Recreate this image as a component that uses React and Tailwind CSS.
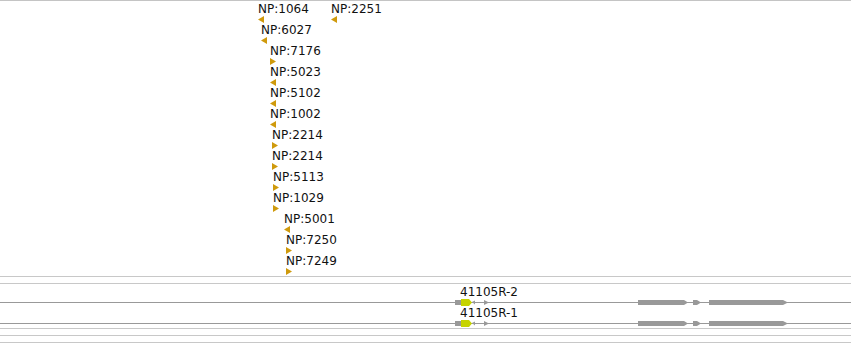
const rows = [
  [
    { label: "NP:1064", x: 258, dir: "left" },
    { label: "NP:2251", x: 331, dir: "left" },
  ],
  [{ label: "NP:6027", x: 261, dir: "left" }],
  [{ label: "NP:7176", x: 270, dir: "right" }],
  [{ label: "NP:5023", x: 270, dir: "left" }],
  [{ label: "NP:5102", x: 270, dir: "left" }],
  [{ label: "NP:1002", x: 270, dir: "left" }],
  [{ label: "NP:2214", x: 272, dir: "right" }],
  [{ label: "NP:2214", x: 272, dir: "right" }],
  [{ label: "NP:5113", x: 273, dir: "right" }],
  [{ label: "NP:1029", x: 273, dir: "right" }],
  [{ label: "NP:5001", x: 284, dir: "left" }],
  [{ label: "NP:7250", x: 286, dir: "right" }],
  [{ label: "NP:7249", x: 286, dir: "right" }],
];

function Arrow({ dir }) {
  return (
    <svg width="6" height="7" viewBox="0 0 6 7" className="block">
      {dir === "left" ? (
        <polygon points="6,0 6,7 0,3.5" fill="#cf9a0c" />
      ) : (
        <polygon points="0,0 0,7 6,3.5" fill="#cf9a0c" />
      )}
    </svg>
  );
}

function Feature({ f }) {
  return (
    <div className="absolute top-0 flex flex-col items-start" style={{ left: f.x }}>
      <span className="h-[14px] leading-[14px] text-[12px] text-[#111] whitespace-nowrap">
        {f.label}
      </span>
      <Arrow dir={f.dir} />
    </div>
  );
}

function GeneTrack({ label }) {
  return (
    <div className="flex flex-col">
      <div className="h-[14px] pl-[460px] leading-[14px] text-[12px] text-[#111]">{label}</div>
      <svg width="851" height="7" className="block">
        <rect x="0" y="3" width="851" height="1" fill="#999" />
        <rect x="455" y="1" width="6" height="5" fill="#999" />
        <polygon points="461,0 469,0 472,3.5 469,7 461,7" fill="#c6d300" />
        <polygon points="472,3 475,1.5 475,5.5" fill="#999" />
        <polygon points="484,1 489,3.5 484,6" fill="#999" />
        <polygon points="638,1 684,1 688,3.5 684,6 638,6" fill="#999" />
        <polygon points="693,1 697,1 701,3.5 697,6 693,6" fill="#999" />
        <polygon points="709,1 783,1 788,3.5 783,6 709,6" fill="#999" />
      </svg>
    </div>
  );
}

export default function App() {
  return (
    <div className="w-[851px] h-[343px] bg-white overflow-hidden font-['DejaVu_Sans',sans-serif]">
      <div className="h-px bg-[#c4c4c4]" />
      <div className="flex flex-col pt-[1px]">
        {rows.map((row, i) => (
          <div key={i} className="relative h-[21px]">
            {row.map((f, j) => (
              <Feature key={j} f={f} />
            ))}
          </div>
        ))}
      </div>
      <div className="mt-[1px] h-px bg-[#c8c8c8]" />
      <div className="mt-[6px] h-px bg-[#c8c8c8]" />
      <div className="mt-[1px]">
        <GeneTrack label="41105R-2" />
        <GeneTrack label="41105R-1" />
      </div>
      <div className="mt-[1px] h-px bg-[#c8c8c8]" />
      <div className="mt-[6px] h-px bg-[#c8c8c8]" />
      <div className="mt-[6px] h-px bg-[#c8c8c8]" />
    </div>
  );
}
